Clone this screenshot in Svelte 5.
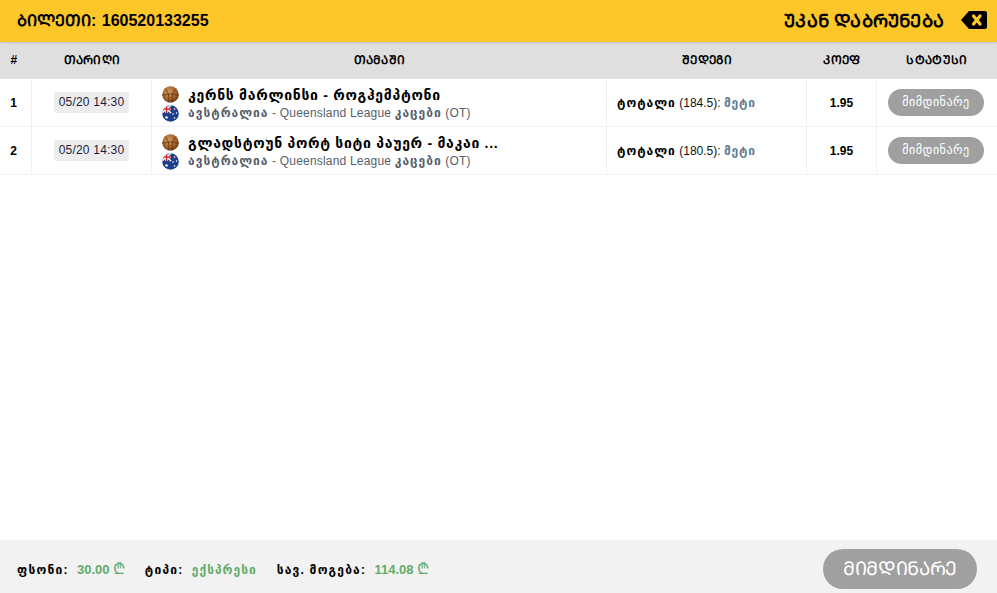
<script>
  const rows = [
    { n: 1, date: '05/20 14:30', game: 'კერნს მარლინსი - როგჰემპტონი', total: '184.5' },
    { n: 2, date: '05/20 14:30', game: 'გლადსტოუნ პორტ სიტი პაუერ - მაკაი ...', total: '180.5' },
  ];
</script>

<div class="page">
  <header class="top">
    <div class="ticket">ᲑᲘᲚᲔᲗᲘ: 160520133255</div>
    <div class="back">
      <span>ᲣᲙᲐᲜ ᲓᲐᲑᲠᲣᲜᲔᲑᲐ</span>
      <svg width="28" height="20" viewBox="0 0 28 20">
        <path d="M9 1H25a2 2 0 0 1 2 2V17a2 2 0 0 1-2 2H9L1 10Z" fill="#000" />
        <path d="M13.5 6l6.5 8M20 6l-6.5 8" stroke="#fdc729" stroke-width="3.2" stroke-linecap="round" />
      </svg>
    </div>
  </header>

  <table class="bets">
    <colgroup>
      <col style="width:32px" /><col style="width:120px" /><col style="width:455px" />
      <col style="width:200px" /><col style="width:70px" /><col />
    </colgroup>
    <thead>
      <tr>
        <th>#</th><th>ᲗᲐᲠᲘᲦᲘ</th><th>ᲗᲐᲛᲐᲨᲘ</th><th>ᲨᲔᲓᲔᲒᲘ</th><th>ᲙᲝᲔᲤ</th><th>ᲡᲢᲐᲢᲣᲡᲘ</th>
      </tr>
    </thead>
    <tbody>
      {#each rows as row}
        <tr>
          <td class="num">{row.n}</td>
          <td class="center"><span class="date">{row.date}</span></td>
          <td class="game">
            <div class="game-inner">
              <div class="icons">
                <svg width="17" height="17" viewBox="0 0 17 17">
                  <defs>
                    <radialGradient id="ball-{row.n}" cx="0.4" cy="0.35" r="0.7">
                      <stop offset="0" stop-color="#d9975a" />
                      <stop offset="0.6" stop-color="#a4602a" />
                      <stop offset="1" stop-color="#6b3a14" />
                    </radialGradient>
                  </defs>
                  <circle cx="8.5" cy="8.5" r="8.3" fill="url(#ball-{row.n})" />
                  <path d="M3 2.5C6.5 5.5 7.5 11 6.5 16.3M14 2.5C10.5 5.5 9.5 11 10.5 16.3M0.4 9.3C6 7.6 11 7.6 16.6 9.3" fill="none" stroke="#4a2b12" stroke-width="0.7" />
                </svg>
                <svg width="17" height="17" viewBox="0 0 17 17">
                  <defs>
                    <clipPath id="flag-{row.n}"><circle cx="8.5" cy="8.5" r="8.3" /></clipPath>
                  </defs>
                  <g clip-path="url(#flag-{row.n})">
                    <rect width="17" height="17" fill="#1b3f8b" />
                    <path d="M0 0L9 8M9 0L0 8" stroke="#fff" stroke-width="1.6" />
                    <path d="M4.5 0V8M0 4H9" stroke="#fff" stroke-width="2.4" />
                    <path d="M4.5 0V8M0 4H9" stroke="#d8202c" stroke-width="1.3" />
                    <circle cx="4.5" cy="12.5" r="1.2" fill="#fff" />
                    <circle cx="12.5" cy="4" r="0.8" fill="#fff" />
                    <circle cx="14.5" cy="8" r="0.8" fill="#fff" />
                    <circle cx="11" cy="9" r="0.8" fill="#fff" />
                    <circle cx="12.5" cy="13" r="0.8" fill="#fff" />
                  </g>
                </svg>
              </div>
              <div class="names">
                <div class="match">{row.game}</div>
                <div class="league"><span class="ka">ავსტრალია</span> - Queensland League <span class="ka">კაცები</span> (OT)</div>
              </div>
            </div>
          </td>
          <td class="result">
            <b>ტოტალი</b> ({row.total}): <span class="pick">მეტი</span>
          </td>
          <td class="center coef">1.95</td>
          <td class="center"><span class="status">მიმდინარე</span></td>
        </tr>
      {/each}
    </tbody>
  </table>

  <footer class="bottom">
    <div class="stats">
      <span class="stat"><b>ფსონი:</b> <em>30.00</em> <i>₾</i></span>
      <span class="stat"><b>ტიპი:</b> <em class="ka">ექსპრესი</em></span>
      <span class="stat"><b>სავ. მოგება:</b> <em>114.08</em> <i>₾</i></span>
    </div>
    <div class="state">ᲛᲘᲛᲓᲘᲜᲐᲠᲔ</div>
  </footer>
</div>

<style>
  :global(body) {
    background: #fff;
  }

  .page {
    height: 593px;
    display: flex;
    flex-direction: column;
    font-family: "Liberation Sans", "DejaVu Sans", sans-serif;
    color: #000;
  }

  .top {
    height: 42px;
    flex-shrink: 0;
    box-sizing: border-box;
    background: #fdc729;
    display: flex;
    justify-content: space-between;
    align-items: center;
    padding: 0 9px 2px 17px;
    position: relative;
    box-shadow: 0 1px 2px rgba(0, 0, 0, 0.15);
  }

  .ticket {
    font-size: 16px;
    font-weight: 700;
    word-spacing: 1px;
  }

  .back {
    display: flex;
    align-items: center;
    gap: 16px;
    font-size: 18px;
    font-weight: 700;
    letter-spacing: 0.2px;
  }

  .bets {
    width: 997px;
    table-layout: fixed;
    border-collapse: separate;
    border-spacing: 0;
    font-size: 12px;
  }

  .bets th {
    height: 35px;
    padding: 0 0 2px;
    background: #dfdfdf;
    font-size: 12px;
    font-weight: 700;
    letter-spacing: 0.3px;
    text-align: center;
    vertical-align: middle;
  }

  .bets th:first-child {
    padding-right: 4px;
  }

  .bets td {
    height: 47px;
    padding: 0;
    border-bottom: 1px solid #f1f1f1;
    border-right: 1px solid #f1f1f1;
    vertical-align: middle;
  }

  .bets td:last-child {
    border-right: 0;
    padding-right: 2px;
  }

  .bets .num {
    text-align: center;
    font-weight: 700;
    padding-right: 4px;
  }

  .bets .center {
    text-align: center;
  }

  .date {
    display: inline-block;
    padding: 0 5px;
    line-height: 21px;
    letter-spacing: 0.2px;
    background: #ececec;
    border-radius: 2px;
    color: #1d1d3a;
  }

  .bets .game {
    padding-left: 10px;
  }

  .game-inner {
    display: flex;
    align-items: center;
    padding-top: 2px;
  }

  .icons {
    width: 26px;
    flex-shrink: 0;
    display: flex;
    flex-direction: column;
    gap: 2px;
  }

  .match {
    font-size: 14px;
    font-weight: 700;
    line-height: 19px;
    letter-spacing: 0.7px;
  }

  .league {
    font-size: 12px;
    color: #555e69;
    line-height: 17px;
    letter-spacing: 0.2px;
  }

  .league .ka {
    font-weight: 700;
    letter-spacing: 1px;
  }

  .bets .result {
    padding-left: 10px;
    color: #111;
  }

  .result b {
    color: #000;
    letter-spacing: 1px;
  }

  .pick {
    font-weight: 700;
    letter-spacing: 0.8px;
    color: #5f7d95;
  }

  .coef {
    font-weight: 700;
  }

  .status {
    display: block;
    width: 96px;
    margin: 0 auto;
    line-height: 27px;
    border-radius: 14px;
    background: #a0a0a0;
    color: #fff;
    letter-spacing: 0.5px;
  }

  .bottom {
    margin-top: auto;
    height: 53px;
    flex-shrink: 0;
    box-sizing: border-box;
    background: #f2f2f2;
    display: flex;
    justify-content: space-between;
    align-items: center;
    padding: 5px 20px 0 17px;
  }

  .stats {
    display: flex;
    align-items: baseline;
    gap: 20px;
    font-size: 12px;
    margin-bottom: 2px;
  }

  .stat b {
    letter-spacing: 1.2px;
  }

  .stat em {
    font-style: normal;
    font-weight: 700;
    font-size: 13px;
    color: #62ab6a;
    margin-left: 5px;
  }

  .stat em.ka {
    font-size: 12px;
    letter-spacing: 1px;
  }

  .stat i {
    font-style: normal;
    font-size: 16px;
    color: #62ab6a;
  }

  .state {
    width: 154px;
    line-height: 40px;
    border-radius: 20px;
    background: #a0a0a0;
    color: #fff;
    font-size: 19px;
    letter-spacing: -0.3px;
    text-align: center;
  }
</style>
